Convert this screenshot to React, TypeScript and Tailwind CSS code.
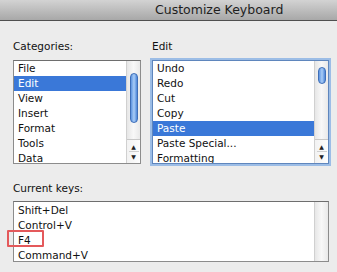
import React from "react";

function Scrollbar({ thumbTop, thumbHeight, showThumb = true, arrows = true }: { thumbTop: number; thumbHeight: number; showThumb?: boolean; arrows?: boolean }) {
  return (
    <div className="relative w-[14px] h-full border-l border-[#d0d0d0] bg-gradient-to-r from-[#e6e6e6] via-[#f8f8f8] to-[#e9e9e9] flex flex-col">
      <div className="relative flex-1">
        {showThumb && (
          <div
            className="absolute left-[3px] w-[8px] rounded-full border border-[#3f6fb8] bg-gradient-to-r from-[#5d93e0] via-[#a9cdf7] to-[#4d86d8]"
            style={{ top: thumbTop, height: thumbHeight }}
          />
        )}
      </div>
      {arrows && (
        <div className="h-[24px] flex flex-col items-center justify-center border-t border-[#c8c8c8] bg-gradient-to-r from-[#f2f2f2] to-[#fdfdfd]">
          <div className="text-[6px] leading-[9px] text-[#222]">▲</div>
          <div className="h-px w-[10px] bg-[#cfcfcf]" />
          <div className="text-[6px] leading-[9px] text-[#222]">▼</div>
        </div>
      )}
    </div>
  );
}

function Row({ text, selected }: { text: string; selected?: boolean }) {
  return (
    <div className={`h-[15px] leading-[15px] pl-[4px] whitespace-nowrap ${selected ? "bg-[#3a78d8] text-white" : "text-[#111]"}`}>{text}</div>
  );
}

export default function App() {
  return (
    <div className="w-[337px] h-[272px] overflow-hidden bg-[#ececec] text-[10.5px] text-[#111]" style={{ fontFamily: '"DejaVu Sans", sans-serif' }}>
      <div className="h-[21px] border-b border-[#4f4f4f] bg-gradient-to-b from-[#d3d3d3] to-[#a8a8a8]">
        <div className="pl-[155px] leading-[20px] text-[12.5px] text-[#1e1e1e]">Customize Keyboard</div>
      </div>
      <div className="pl-[13px] pr-[8px]">
        <div className="flex gap-[11px] mt-[18px]">
          <div className="w-[128px] flex flex-col">
            <div className="h-[14px] leading-[14px]">Categories:</div>
            <div className="mt-[7px] h-[104px] border border-[#8c8c8c] border-t-[#6e6e6e] bg-white flex">
              <div className="flex-1 overflow-hidden">
                {["File", "Edit", "View", "Insert", "Format", "Tools", "Data"].map((t) => (
                  <Row key={t} text={t} selected={t === "Edit"} />
                ))}
              </div>
              <Scrollbar thumbTop={12} thumbHeight={50} />
            </div>
          </div>
          <div className="flex-1 flex flex-col">
            <div className="h-[14px] leading-[14px]">Edit</div>
            <div className="mt-[7px] h-[104px] border border-[#5f86bd] bg-white flex shadow-[0_0_0_2px_#9cbde6]">
              <div className="flex-1 overflow-hidden">
                {["Undo", "Redo", "Cut", "Copy", "Paste", "Paste Special...", "Formatting"].map((t) => (
                  <Row key={t} text={t} selected={t === "Paste"} />
                ))}
              </div>
              <Scrollbar thumbTop={6} thumbHeight={17} />
            </div>
          </div>
        </div>
        <div className="mt-[17px] h-[14px] leading-[14px]">Current keys:</div>
        <div className="mt-[6px] h-[61px] border border-[#8c8c8c] border-t-[#6e6e6e] bg-white flex relative">
          <div className="flex-1 pt-px">
            {["Shift+Del", "Control+V", "F4", "Command+V"].map((t) => (
              <Row key={t} text={t} />
            ))}
          </div>
          <Scrollbar thumbTop={0} thumbHeight={0} showThumb={false} arrows={false} />
          <div className="absolute left-[-7px] top-[28px] w-[37px] h-[17px] border-2 border-[#e4595b] rounded-[1px]" />
        </div>
      </div>
    </div>
  );
}
